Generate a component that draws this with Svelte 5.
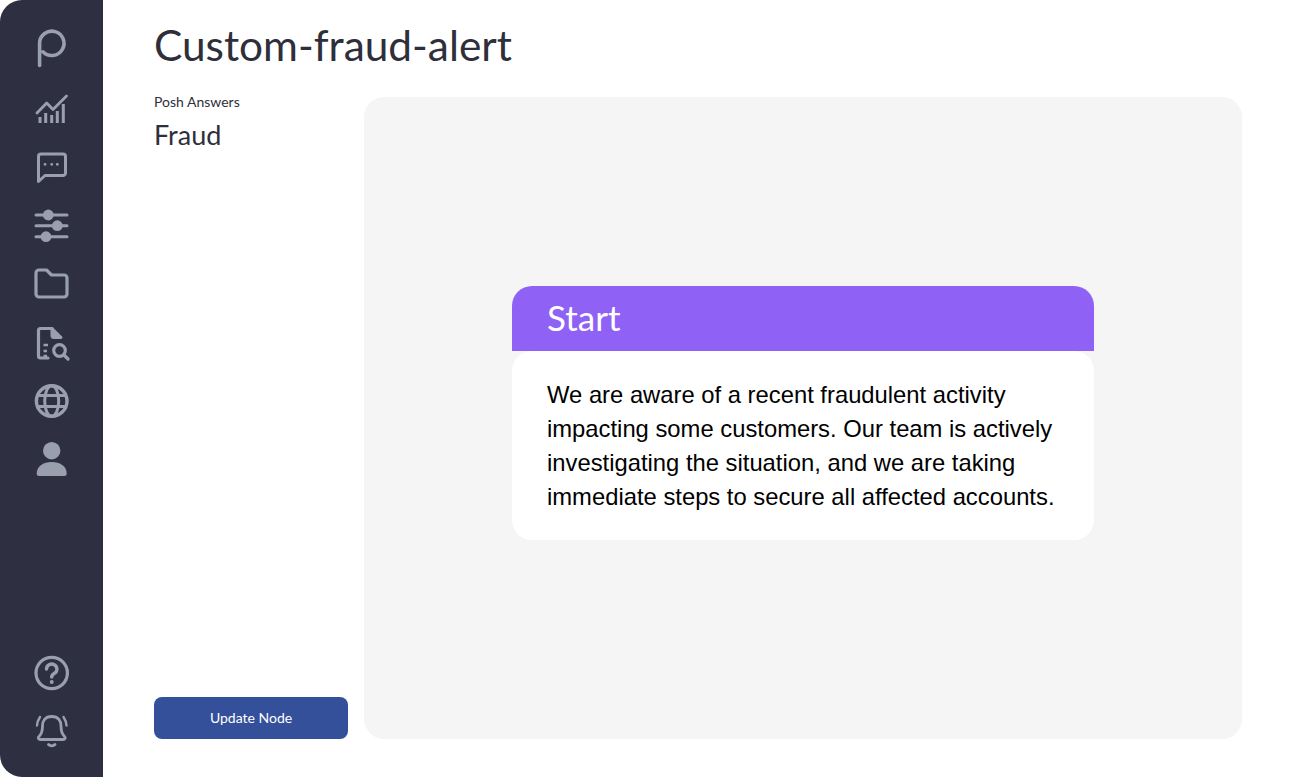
<script>
  const topIcons = ['logo', 'chart', 'chat', 'sliders', 'folder', 'doc', 'globe', 'user'];
  const bottomIcons = ['help', 'bell'];
</script>

{#snippet icon(name)}
  <svg class="icon" viewBox="0 0 40 40" width="40" height="40" fill="none" stroke="currentColor" stroke-width="3" stroke-linecap="round" stroke-linejoin="round">
    {#if name === 'logo'}
      <path stroke-width="3.6" d="M8.6 38.5 V16 A12.2 12.2 0 1 1 12 24.8" />
    {:else if name === 'chart'}
      <path stroke-width="2.8" d="M6 24 L15.7 14 L22 20.5 L35.5 7" />
      <path stroke-width="3" stroke-linecap="butt" d="M9 34 V28 M14.7 34 V24 M20.7 34 V26 M26.3 34 V22 M32.3 34 V15" />
    {:else if name === 'chat'}
      <path d="M7.5 34.5 V9.5 A2.5 2.5 0 0 1 10 7 H32 A2.5 2.5 0 0 1 34.5 9.5 V26 A2.5 2.5 0 0 1 32 28.5 H14 Z" />
      <path stroke-width="2.8" d="M14 17.3 h.1 M20.7 17.3 h.1 M26.3 17.3 h.1" />
    {:else if name === 'sliders'}
      <path d="M5 9 H36 M5 19.7 H36 M5 30.7 H36" />
      <circle cx="17.3" cy="9" r="5.4" fill="currentColor" stroke="none" />
      <circle cx="26.3" cy="19.7" r="5.4" fill="currentColor" stroke="none" />
      <circle cx="15" cy="30.7" r="5.4" fill="currentColor" stroke="none" />
    {:else if name === 'folder'}
      <path stroke-width="3.2" d="M5 9 A3 3 0 0 1 8 6 H15.5 L20.5 11 H33 A3 3 0 0 1 36 14 V30 A3 3 0 0 1 33 33 H8 A3 3 0 0 1 5 30 Z" />
    {:else if name === 'doc'}
      <path stroke-width="3.2" d="M21 5.5 H9.5 A2 2 0 0 0 7.5 7.5 V33 A2 2 0 0 0 9.5 35 H17" />
      <path stroke-width="3" fill="currentColor" d="M21 5.5 L30 14.5 H23 A2 2 0 0 1 21 12.5 Z" />
      <path stroke-width="2.6" stroke-linecap="butt" d="M12.5 22 H17 M12.5 28 H16 M12.5 33 H16" />
      <circle cx="28.5" cy="27.5" r="5.8" stroke-width="3.2" />
      <path stroke-width="3.2" d="M33 32 L37 36" />
    {:else if name === 'globe'}
      <circle cx="20.7" cy="20" r="15.3" stroke-width="3.4" />
      <ellipse cx="20.7" cy="20" rx="7" ry="15.3" />
      <path stroke-linecap="butt" d="M6.5 14.5 H35 M6.5 25.5 H35" />
    {:else if name === 'user'}
      <circle cx="20.7" cy="11.7" r="8.7" fill="currentColor" stroke="none" />
      <path fill="currentColor" stroke="none" d="M5.7 34.5 C5.7 27.5 12 23 20.7 23 C29.4 23 35.7 27.5 35.7 34.5 A2.5 2.5 0 0 1 33.2 37 H8.2 A2.5 2.5 0 0 1 5.7 34.5 Z" />
    {:else if name === 'help'}
      <circle cx="20.7" cy="20" r="15.7" stroke-width="3.2" />
      <path stroke-width="3.4" d="M15.5 16 A5.2 5 0 1 1 23.5 20.3 C21.5 21.5 20.7 22.5 20.7 24" />
      <path stroke-width="3.8" d="M20.7 29 h.1" />
    {:else if name === 'bell'}
      <path stroke-width="2.8" d="M20.7 5.5 C14 5.5 11.5 10 11.5 15 C11.5 21 10 23.5 8 25.5 C6.5 27 7.5 28.5 9.5 28.5 H32 C34 28.5 35 27 33.5 25.5 C31.5 23.5 30 21 30 15 C30 10 27.5 5.5 20.7 5.5 Z" />
      <path stroke-width="2.8" d="M17.5 33.5 C19 35.2 22.5 35.2 24 33.5" />
      <path stroke-width="2.4" d="M6 14.5 C6.3 11 7.3 8.5 9 6 M35.5 14.5 C35.2 11 34.2 8.5 32.5 6" />
    {/if}
  </svg>
{/snippet}

<div class="app">
  <aside class="sidebar">
    <nav class="nav top">
      {#each topIcons as name}
        {@render icon(name)}
      {/each}
    </nav>
    <nav class="nav">
      {#each bottomIcons as name}
        {@render icon(name)}
      {/each}
    </nav>
  </aside>

  <main class="main">
    <h1>Custom-fraud-alert</h1>
    <div class="content">
      <section class="details">
        <div class="crumb">Posh Answers</div>
        <h2>Fraud</h2>
        <button class="update">Update Node</button>
      </section>
      <section class="canvas">
        <div class="node">
          <div class="node-head">Start</div>
          <div class="node-body">
            We are aware of a recent fraudulent activity impacting some customers. Our team is actively investigating the situation, and we are taking immediate steps to secure all affected accounts.
          </div>
        </div>
      </section>
    </div>
  </main>
</div>

<style>
  :global(body) {
    margin: 0;
    background: #fff;
  }

  .app {
    display: flex;
    height: 777px;
    font-family: Lato, "Open Sans", sans-serif;
    color: #2e2f3b;
  }

  .sidebar {
    flex: 0 0 103px;
    display: flex;
    flex-direction: column;
    justify-content: space-between;
    padding: 27px 0 26px 31px;
    box-sizing: border-box;
    background: #2e3042;
    border-radius: 22px 0 0 22px;
    color: #9a9fae;
  }

  .nav {
    display: flex;
    flex-direction: column;
    gap: 18.4px;
  }

  .top :global(svg:first-child) {
    margin-bottom: 3.6px;
  }

  .icon {
    display: block;
    overflow: visible;
  }

  .main {
    flex: 1;
    display: flex;
    flex-direction: column;
    padding: 0 50px 38px 51px;
    min-width: 0;
  }

  h1 {
    margin: 0;
    height: 97px;
    padding-top: 19px;
    box-sizing: border-box;
    font-size: 42.4px;
    line-height: 52px;
    font-weight: 400;
  }

  .content {
    flex: 1;
    display: flex;
    gap: 16px;
    min-height: 0;
  }

  .details {
    flex: 0 0 194px;
    display: flex;
    flex-direction: column;
  }

  .crumb {
    font-size: 14px;
    line-height: 16px;
    margin-top: -3px;
  }

  h2 {
    margin: 9px 0 0;
    font-size: 27px;
    line-height: 32px;
    font-weight: 400;
  }

  .update {
    margin-top: auto;
    height: 42px;
    padding-bottom: 2px;
    border: none;
    border-radius: 8px;
    background: #34509b;
    color: #fff;
    font-family: inherit;
    font-size: 14px;
  }

  .canvas {
    flex: 1;
    display: flex;
    justify-content: center;
    padding-top: 189px;
    box-sizing: border-box;
    background: #f5f5f5;
    border-radius: 20px;
  }

  .node {
    width: 582px;
  }

  .node-head {
    height: 64.5px;
    padding-left: 35px;
    box-sizing: border-box;
    background: #8f62f5;
    border-radius: 20px 20px 0 0;
    color: #fff;
    font-size: 35px;
    line-height: 63px;
  }

  .node-body {
    padding: 27.5px 35px 26px;
    background: #fff;
    border-radius: 20px;
    font-family: "Liberation Sans", Arial, sans-serif;
    font-size: 23.8px;
    line-height: 34px;
    color: #000;
  }
</style>
